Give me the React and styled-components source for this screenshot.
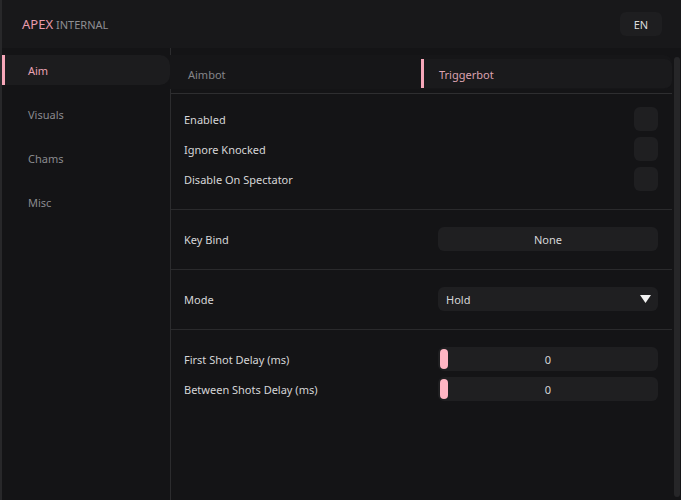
import React, { useState } from 'react';
import styled, { createGlobalStyle } from 'styled-components';

const GlobalStyle = createGlobalStyle`
   html, body {
      margin: 0;
      padding: 0;
      background: #141416;
   }
   body {
      font-family: 'Noto Sans', 'Open Sans', sans-serif;
      font-size: 11px;
   }
`;

const Window = styled.div`
   width: 681px;
   height: 500px;
   box-sizing: border-box;
   border-left: 2px solid #28282a;
   background: #141416;
   display: flex;
   flex-direction: column;
   overflow: hidden;
`;

const Header = styled.header`
   height: 48px;
   flex-shrink: 0;
   display: flex;
   align-items: center;
   justify-content: space-between;
   padding: 0 19px 0 20px;
   background: #18181a;
`;

const Logo = styled.div`
   display: flex;
   align-items: baseline;
   gap: 3px;
`;

const LogoMain = styled.span`
   color: #e99bad;
   font-size: 13px;
`;

const LogoSub = styled.span`
   color: #8e8e92;
   font-size: 11px;
`;

const LangButton = styled.button`
   width: 42px;
   height: 24px;
   border: none;
   border-radius: 6px;
   background: #1e1e20;
   color: #dcdcdc;
   font-family: inherit;
   font-size: 11px;
   padding: 0;
`;

const Body = styled.div`
   flex: 1;
   display: flex;
   min-height: 0;
`;

const Sidebar = styled.nav`
   width: 168px;
   flex-shrink: 0;
   padding-top: 7px;
   display: flex;
   flex-direction: column;
   gap: 14px;
`;

const NavItem = styled.div`
   height: 30px;
   display: flex;
   align-items: center;
   padding-left: 23px;
   border-top-right-radius: 10px;
   border-bottom-right-radius: 10px;
   color: ${p => (p.$active ? '#e9a2b3' : '#8a8a8e')};
   background: ${p => (p.$active ? '#1c1c1e' : 'transparent')};
   border-left: 3px solid ${p => (p.$active ? '#f6a7b9' : 'transparent')};
`;

const Column = styled.div`
   flex: 1;
   display: flex;
   border-left: 1px solid #2c2c2e;
   min-width: 0;
`;

const Main = styled.div`
   flex: 1;
   display: flex;
   flex-direction: column;
   min-width: 0;
`;

const TabBar = styled.div`
   margin: 7px 0 4px -1px;
   height: 34px;
   box-sizing: border-box;
   padding: 4px 0 1px 4px;
   background: #161618;
   border-top-right-radius: 8px;
   border-bottom-right-radius: 8px;
   display: flex;
`;

const Tab = styled.div`
   flex: 1;
   display: flex;
   align-items: center;
   padding-top: 2px;
   padding-left: ${p => (p.$active ? '15px' : '14px')};
   color: ${p => (p.$active ? '#dca2b0' : '#858589')};
   background: ${p => (p.$active ? '#1a1a1c' : 'transparent')};
   border-left: ${p => (p.$active ? '3px solid #f6a7b9' : 'none')};
   border-top-right-radius: 7px;
   border-bottom-right-radius: 7px;
`;

const Panel = styled.div`
   border-top: 1px solid #2e2e30;
   flex: 1;
`;

const Section = styled.section`
   padding: 17px 14px 12px 13px;
   border-bottom: 1px solid #2a2a2c;

   &:first-child {
      padding-top: 13px;
   }
   &:last-child {
      border-bottom: none;
   }
`;

const Row = styled.div`
   height: 24px;
   margin-bottom: 6px;
   display: flex;
   align-items: center;
   justify-content: space-between;
`;

const Label = styled.span`
   color: #d6d6d8;
`;

const Checkbox = styled.div`
   width: 24px;
   height: 24px;
   border-radius: 6px;
   background: #1f1f21;
`;

const Control = styled.div`
   position: relative;
   width: 220px;
   height: 24px;
   box-sizing: border-box;
   border-radius: 6px;
   background: #1f1f21;
   color: #d6d6d8;
   display: flex;
   align-items: center;
   justify-content: ${p => (p.$left ? 'space-between' : 'center')};
   padding: ${p => (p.$left ? '0 7px 0 8px' : '0')};
`;

const Knob = styled.div`
   position: absolute;
   left: 2px;
   top: 2px;
   width: 8px;
   height: 20px;
   border-radius: 4px;
   background: #ffb5c3;
`;

const ScrollTrack = styled.div`
   width: 6px;
   margin: 9px 1px 3px 2px;
   border-radius: 3px;
   background: #262628;
`;

const Arrow = () => (
   <svg width="11" height="8" viewBox="0 0 11 8">
      <polygon points="0,0 11,0 5.5,8" fill="#f2f2f2" />
   </svg>
);

const navItems = ['Aim', 'Visuals', 'Chams', 'Misc'];

export default function App() {
   const [nav, setNav] = useState('Aim');
   const [tab, setTab] = useState('Triggerbot');

   return (
      <>
         <GlobalStyle />
         <Window>
            <Header>
               <Logo>
                  <LogoMain>APEX</LogoMain>
                  <LogoSub>INTERNAL</LogoSub>
               </Logo>
               <LangButton>EN</LangButton>
            </Header>
            <Body>
               <Sidebar>
                  {navItems.map(n => (
                     <NavItem key={n} $active={nav === n} onClick={() => setNav(n)}>{n}</NavItem>
                  ))}
               </Sidebar>
               <Column>
                  <Main>
                     <TabBar>
                        {['Aimbot', 'Triggerbot'].map(t => (
                           <Tab key={t} $active={tab === t} onClick={() => setTab(t)}>{t}</Tab>
                        ))}
                     </TabBar>
                     <Panel>
                        <Section>
                           <Row><Label>Enabled</Label><Checkbox /></Row>
                           <Row><Label>Ignore Knocked</Label><Checkbox /></Row>
                           <Row><Label>Disable On Spectator</Label><Checkbox /></Row>
                        </Section>
                        <Section>
                           <Row><Label>Key Bind</Label><Control>None</Control></Row>
                        </Section>
                        <Section>
                           <Row><Label>Mode</Label><Control $left><span>Hold</span><Arrow /></Control></Row>
                        </Section>
                        <Section>
                           <Row><Label>First Shot Delay (ms)</Label><Control><Knob />0</Control></Row>
                           <Row><Label>Between Shots Delay (ms)</Label><Control><Knob />0</Control></Row>
                        </Section>
                     </Panel>
                  </Main>
                  <ScrollTrack />
               </Column>
            </Body>
         </Window>
      </>
   );
}
